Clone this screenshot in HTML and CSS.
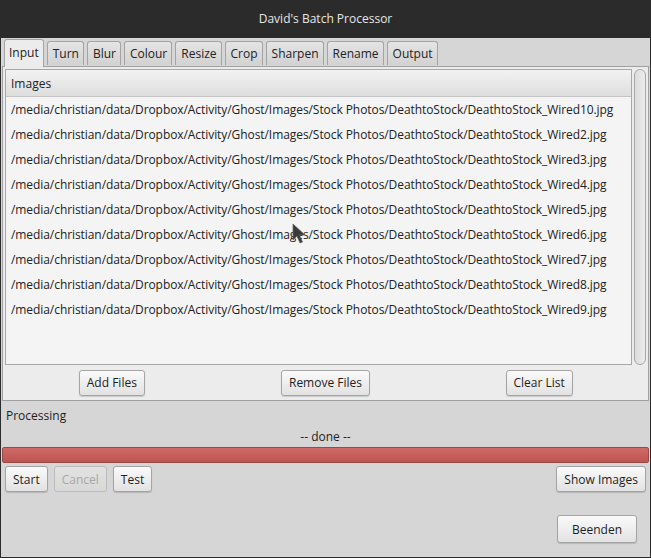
FILE: index.html
```html
<!DOCTYPE html>
<html>
<head>
<meta charset="utf-8">
<link rel="stylesheet" href="styles.css">
</head>
<body>
<div class="window">
  <div class="titlebar">David's Batch Processor</div>
  <div class="tabs">
    <div class="tab active">Input</div>
    <div class="tab">Turn</div>
    <div class="tab">Blur</div>
    <div class="tab">Colour</div>
    <div class="tab">Resize</div>
    <div class="tab">Crop</div>
    <div class="tab">Sharpen</div>
    <div class="tab">Rename</div>
    <div class="tab">Output</div>
  </div>
  <div class="panel">
    <div class="listwrap">
      <div class="list">
        <div class="list-header">Images</div>
        <div class="row">/media/christian/data/Dropbox/Activity/Ghost/Images/Stock Photos/DeathtoStock/DeathtoStock_Wired10.jpg</div>
        <div class="row">/media/christian/data/Dropbox/Activity/Ghost/Images/Stock Photos/DeathtoStock/DeathtoStock_Wired2.jpg</div>
        <div class="row">/media/christian/data/Dropbox/Activity/Ghost/Images/Stock Photos/DeathtoStock/DeathtoStock_Wired3.jpg</div>
        <div class="row">/media/christian/data/Dropbox/Activity/Ghost/Images/Stock Photos/DeathtoStock/DeathtoStock_Wired4.jpg</div>
        <div class="row">/media/christian/data/Dropbox/Activity/Ghost/Images/Stock Photos/DeathtoStock/DeathtoStock_Wired5.jpg</div>
        <div class="row">/media/christian/data/Dropbox/Activity/Ghost/Images/Stock Photos/DeathtoStock/DeathtoStock_Wired6.jpg</div>
        <div class="row">/media/christian/data/Dropbox/Activity/Ghost/Images/Stock Photos/DeathtoStock/DeathtoStock_Wired7.jpg</div>
        <div class="row">/media/christian/data/Dropbox/Activity/Ghost/Images/Stock Photos/DeathtoStock/DeathtoStock_Wired8.jpg</div>
        <div class="row">/media/christian/data/Dropbox/Activity/Ghost/Images/Stock Photos/DeathtoStock/DeathtoStock_Wired9.jpg</div>
      </div>
      <div class="scrollbar"><div class="track"></div></div>
    </div>
    <div class="list-buttons">
      <div class="cell"><button class="btn">Add Files</button></div>
      <div class="cell"><button class="btn">Remove Files</button></div>
      <div class="cell"><button class="btn">Clear List</button></div>
    </div>
  </div>
  <div class="processing">
    <div class="label">Processing</div>
    <div class="status">-- done --</div>
    <div class="progress"></div>
    <div class="actions">
      <div class="group">
        <button class="btn">Start</button>
        <button class="btn disabled">Cancel</button>
        <button class="btn">Test</button>
      </div>
      <button class="btn">Show Images</button>
    </div>
    <div class="footer">
      <button class="btn big">Beenden</button>
    </div>
  </div>
  <svg class="cursor" width="14" height="22" viewBox="0 0 14 22">
    <path d="M1 1 L1 17 L5 13 L8 20 L10.5 19 L7.5 12 L13 12 Z" fill="#3a3a3a" stroke="#6a6a6a" stroke-width="0.8"/>
  </svg>
</div>
</body>
</html>
```

FILE: styles.css
```css
* { box-sizing: border-box; }
html, body {
  margin: 0;
  padding: 0;
}
body {
  width: 651px;
  height: 558px;
  overflow: hidden;
  font-family: "Open Sans", "Noto Sans", sans-serif;
  font-size: 12px;
  color: #1e1e1e;
}
.window {
  position: relative;
  width: 651px;
  height: 558px;
  background: #d6d6d6;
  border: 1px solid #2c2c2c;
  border-top: none;
  display: flex;
  flex-direction: column;
}
.titlebar {
  height: 38px;
  background: #2b2b2b;
  color: #e6e6e6;
  text-align: center;
  line-height: 37px;
  font-size: 12px;
  margin: 0 -1px;
}
.tabs {
  display: flex;
  align-items: flex-end;
  gap: 3px;
  padding-left: 3px;
  height: 28px;
  position: relative;
  z-index: 1;
}
.tab {
  height: 24px;
  padding: 0 4px 0 5px;
  line-height: 23px;
  border: 1px solid #a4a4a4;
  border-bottom: none;
  border-radius: 3px 3px 0 0;
  background: linear-gradient(#e4e4e4, #d2d2d2);
  color: #222;
  margin-bottom: 1px;
}
.tab.active {
  height: 28px;
  line-height: 26px;
  background: #ececec;
  margin-bottom: -1px;
  padding: 0 4px;
}
.panel {
  margin: 0 1px;
  height: 335px;
  border: 1px solid #a0a0a0;
  background: #ececec;
  padding: 2px 2px 0 2px;
  display: flex;
  flex-direction: column;
}
.listwrap {
  display: flex;
  gap: 2px;
  height: 297px;
}
.list {
  flex: 1;
  border: 1px solid #a8a8a8;
  background: #f4f4f4;
  overflow: hidden;
}
.list-header {
  height: 27px;
  line-height: 27px;
  padding-left: 5px;
  background: linear-gradient(#f2f2f2, #dedede);
  border-bottom: 1px solid #c4c4c4;
  color: #222;
}
.row {
  height: 25px;
  line-height: 25px;
  padding-left: 5px;
  white-space: nowrap;
  color: #222;
  letter-spacing: -0.07px;
}
.scrollbar {
  width: 12px;
  padding: 0;
}
.track {
  height: 100%;
  border: 1px solid #a8a8a8;
  border-radius: 6px;
  background: linear-gradient(90deg, #dcdcdc, #ececec);
}
.list-buttons {
  display: grid;
  grid-template-columns: 1fr 1fr 1fr;
  height: 35px;
  align-items: center;
}
.cell {
  display: flex;
  justify-content: center;
}
.btn {
  font-family: "Open Sans", "Noto Sans", sans-serif;
  font-size: 12px;
  color: #1e1e1e;
  height: 26px;
  padding: 0 7px;
  border: 1px solid #a4a4a4;
  border-radius: 3px;
  background: linear-gradient(#fafafa, #e2e2e2);
  box-shadow: 0 1px 1px rgba(0,0,0,0.15);
  margin: 0;
}
.btn.disabled {
  color: #a8a8a8;
  background: linear-gradient(#e2e2e2, #d8d8d8);
  border-color: #bcbcbc;
  box-shadow: none;
}
.btn.big {
  height: 28px;
  padding: 0 14px;
}
.processing {
  padding: 0 1px;
  display: flex;
  flex-direction: column;
}
.label {
  padding-left: 4px;
  height: 21px;
  line-height: 30px;
}
.status {
  text-align: center;
  height: 25px;
  line-height: 29px;
  font-size: 12px;
}
.progress {
  height: 16px;
  border: 1px solid #9e4845;
  border-radius: 2px;
  background: linear-gradient(#d06a66, #bd5552);
}
.actions {
  display: flex;
  justify-content: space-between;
  padding: 3px 3px 0 3px;
}
.group {
  display: flex;
  gap: 6px;
}
.footer {
  display: flex;
  justify-content: flex-end;
  padding: 23px 12px 0 0;
}
.cursor {
  position: absolute;
  left: 291px;
  top: 223px;
}
```
